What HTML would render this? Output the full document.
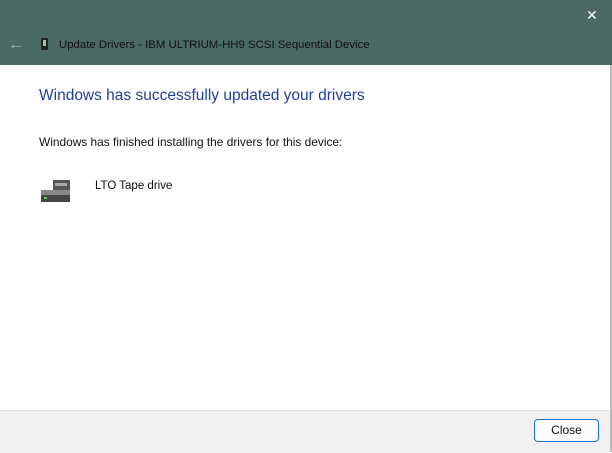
<!DOCTYPE html>
<html><head><style>
body{margin:0;width:612px;height:452px;overflow:hidden;background:#fff;font-family:"Liberation Sans",sans-serif;position:relative}
.tb{position:absolute;left:0;top:0;width:612px;height:65px;background:#4b6a63}
.x{position:absolute;left:586px;top:7px;color:#fff;font-size:14px;font-weight:100}
.back{position:absolute;left:8px;top:36px;color:#9fb3ae;font-size:16px}
.title{position:absolute;left:59px;top:39px;font-size:11.4px;color:#111}
.ph{position:absolute;left:41px;top:38px;width:7px;height:12px;background:#222;border-radius:1px}
.ph i{position:absolute;left:2px;top:2px;width:3px;height:6px;background:#9c9}
.side{position:absolute;right:0;top:65px;width:2px;height:387px;background:#bbb}
h1{position:absolute;left:39px;top:87px;margin:0;font-weight:normal;font-size:15.5px;color:#1f3f99}
.t{position:absolute;left:39px;top:135px;font-size:11.9px;color:#111}
.lt{position:absolute;left:95px;top:180px;font-size:11.5px;color:#111}
.foot{position:absolute;left:0;top:410px;width:610px;height:42px;background:#f0f0f0;border-top:1px solid #e3e3e3}
.btn{position:absolute;left:534px;top:419px;width:63px;height:21px;border:1px solid #1a6fcf;border-radius:4px;background:#fbfbfb;font-size:12px;text-align:center;line-height:21px;color:#111}
</style></head><body>
<div class="tb"><div class="x">✕</div><div class="back">←</div><div class="ph"><i></i></div><div class="title">Update Drivers - IBM ULTRIUM-HH9 SCSI Sequential Device</div></div>
<div class="side"></div>
<h1>Windows has successfully updated your drivers</h1>
<div class="t">Windows has finished installing the drivers for this device:</div>
<svg style="position:absolute;left:40px;top:180px" width="32" height="24">
<rect x="13" y="0" width="17" height="10" fill="#555"/><rect x="15" y="3" width="12" height="3" fill="#aaa"/>
<rect x="1" y="10" width="29" height="5" fill="#888"/><rect x="1" y="15" width="29" height="7" fill="#444"/><rect x="4" y="17" width="3" height="2" fill="#5c5"/>
</svg>
<div class="lt">LTO Tape drive</div>
<div class="foot"></div>
<div class="btn">Close</div>
</body></html>
